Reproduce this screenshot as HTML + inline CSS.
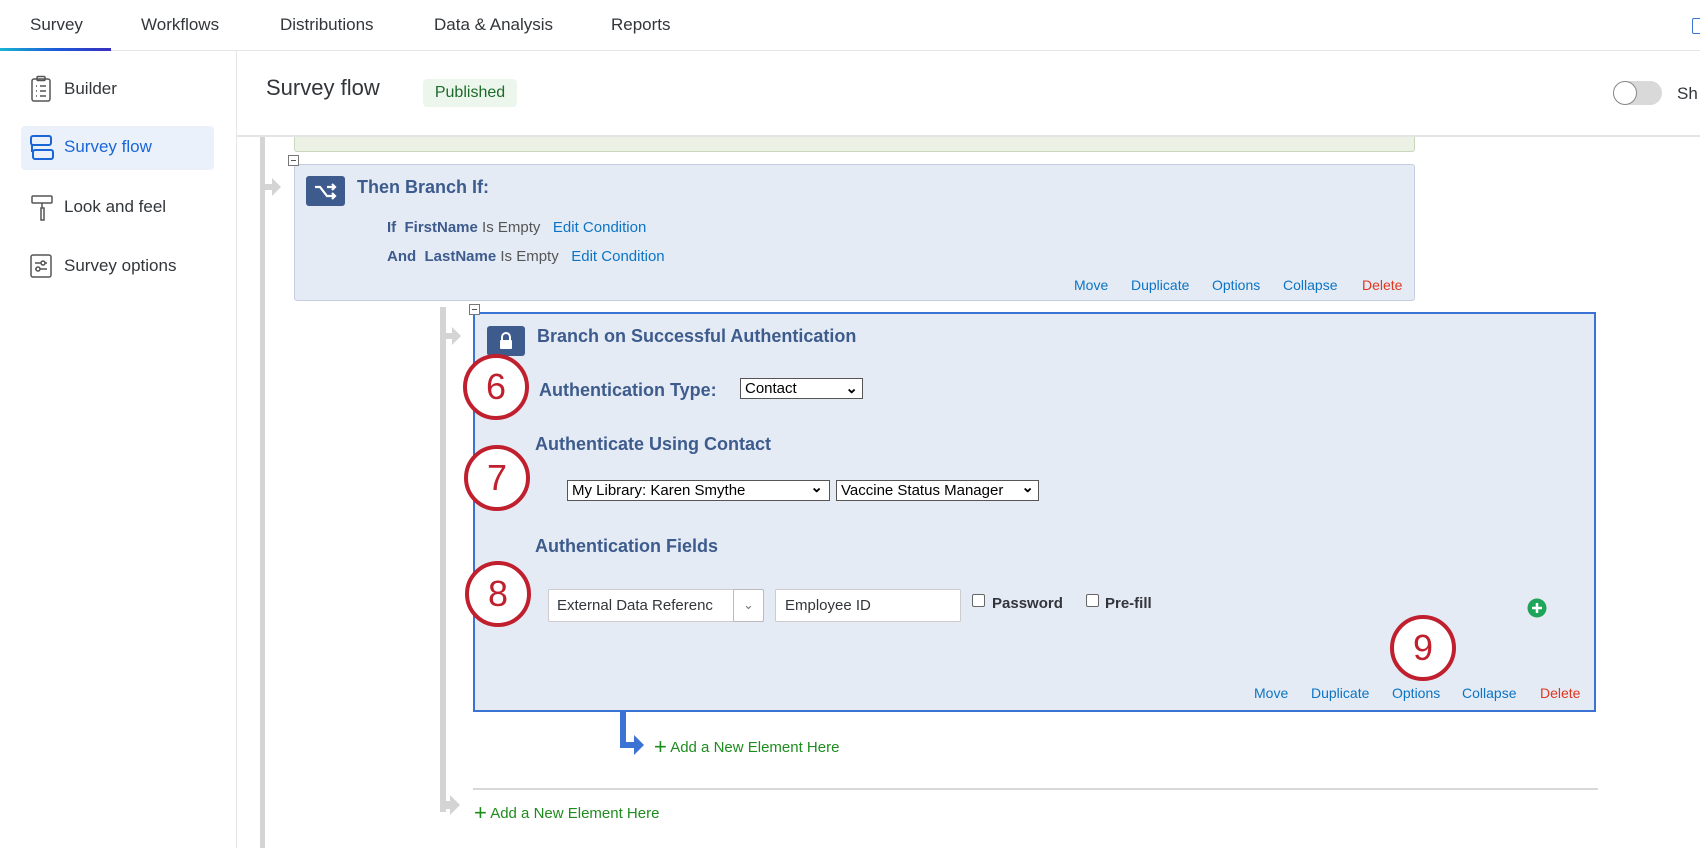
<!DOCTYPE html>
<html><head><meta charset="utf-8"><style>
*{box-sizing:border-box;margin:0;padding:0}
body{width:1700px;height:848px;overflow:hidden;background:#fff;font-family:"Liberation Sans",Arial,sans-serif;position:relative;color:#32363a}
.a{position:absolute;white-space:nowrap}
.tab{font-size:17px;top:15px;color:#32363a}
.side{font-size:17px;left:64px;color:#32363a}
.box{position:absolute;background:#e5ebf5;border:1px solid #c3cede;border-radius:3px}
.ttl{color:#3d5b8c;font-weight:bold;font-size:18px}
.lnk{color:#0b74c4;font-size:14px}
.del{color:#e0361e;font-size:14px}
.circ{position:absolute;width:66px;height:66px;border:4px solid #c01f2e;border-radius:50%;background:#fff;color:#c01f2e;font-size:36px;text-align:center;line-height:58px}
.sel{position:absolute;background:#fff;border:1px solid #555;font-size:15px;padding-left:4px;line-height:19px;color:#000}
.green{color:#1e8c1e;font-size:15px}
.mini{position:absolute;width:11px;height:11px;border:1px solid #777;background:#fff}
.mini:after{content:"";position:absolute;left:2px;right:2px;top:4px;height:1px;background:#555}
</style></head><body>
<!-- top nav -->
<div class="a" style="left:0;top:50px;width:1700px;height:1px;background:#e6e6e6"></div>
<div class="a" style="left:0;top:48px;width:111px;height:3px;background:linear-gradient(90deg,#19b4d2,#1c5ad8,#3a2fbf)"></div>
<div class="a tab" style="left:30px">Survey</div>
<div class="a tab" style="left:141px">Workflows</div>
<div class="a tab" style="left:280px">Distributions</div>
<div class="a tab" style="left:434px">Data &amp; Analysis</div>
<div class="a tab" style="left:611px">Reports</div>
<div class="a" style="left:1692px;top:18px;width:10px;height:16px;border:1.5px solid #3a73d4;border-radius:2px"></div>
<!-- sidebar -->
<div class="a" style="left:236px;top:51px;width:1px;height:797px;background:#e6e6e6"></div>
<div class="a" style="left:21px;top:126px;width:193px;height:44px;background:#eaf1fb;border-radius:4px"></div>
<svg class="a" style="left:30px;top:75px" width="22" height="28" viewBox="0 0 22 28" fill="none" stroke="#555" stroke-width="1.5"><rect x="2" y="4" width="18" height="22" rx="2"/><rect x="7" y="1.5" width="8" height="4" rx="1"/><path d="M6 11h1M6 16h1M6 21h1M10 11h6M10 16h6M10 21h6"/></svg>
<div class="a side" style="top:79px">Builder</div>
<svg class="a" style="left:30px;top:135px" width="24" height="26" viewBox="0 0 24 26" fill="none" stroke="#1a66d6" stroke-width="2"><rect x="1" y="1" width="20" height="9" rx="2"/><rect x="3" y="15" width="20" height="9" rx="2"/><path d="M2 10v7"/></svg>
<div class="a side" style="top:137px;color:#1a66d6">Survey flow</div>
<svg class="a" style="left:31px;top:195px" width="22" height="28" viewBox="0 0 22 28" fill="none" stroke="#555" stroke-width="1.5"><rect x="1" y="1" width="20" height="7" rx="1"/><path d="M11 8v5M10 13h3v12h-3z"/></svg>
<div class="a side" style="top:197px">Look and feel</div>
<svg class="a" style="left:30px;top:254px" width="22" height="24" viewBox="0 0 22 24" fill="none" stroke="#555" stroke-width="1.5"><rect x="1" y="1" width="20" height="22" rx="2"/><path d="M5 9h12M5 15h12"/><circle cx="13" cy="9" r="2" fill="#fff"/><circle cx="8" cy="15" r="2" fill="#fff"/></svg>
<div class="a side" style="top:256px">Survey options</div>
<!-- header -->
<div class="a" style="left:266px;top:75px;font-size:22px;color:#32363a">Survey flow</div>
<div class="a" style="left:423px;top:79px;width:94px;height:28px;background:#edf6ed;border-radius:4px;color:#1c6b2a;font-size:16px;text-align:center;line-height:28px">Published</div>
<div class="a" style="left:1613px;top:81px;width:49px;height:24px;background:#d9d9d9;border-radius:12px"></div>
<div class="a" style="left:1613px;top:81px;width:24px;height:24px;background:#fff;border:1.5px solid #888;border-radius:50%"></div>
<div class="a" style="left:1677px;top:84px;font-size:17px">Sh</div>
<!-- flow content -->
<div class="a" style="left:294px;top:136px;width:1121px;height:16px;background:#ebf1e4;border:1px solid #c9d8bd;border-top:none;border-radius:0 0 3px 3px"></div>
<div class="a" style="left:237px;top:135px;width:1463px;height:2px;background:#e4e4e4"></div>
<div class="a" style="left:260px;top:137px;width:5px;height:711px;background:#d4d4d4"></div>
<svg class="a" style="left:262px;top:176px" width="22" height="22"><path d="M0 8h10V2l9 9-9 9v-6H0z" fill="#d4d4d4"/></svg>
<div class="box" style="left:294px;top:164px;width:1121px;height:137px"></div>
<div class="mini" style="left:288px;top:155px"></div>
<div class="a" style="left:306px;top:176px;width:39px;height:30px;background:#3d5b8c;border-radius:3px"></div>
<svg class="a" style="left:314px;top:182px" width="24" height="18" viewBox="0 0 24 18" fill="none" stroke="#fff" stroke-width="2.2"><path d="M1 5h5l7 9h8M13 5h8M18 2l3 3-3 3M18 11l3 3-3 3"/></svg>
<div class="a ttl" style="left:357px;top:177px">Then Branch If:</div>
<div class="a" style="left:387px;top:219px;font-size:15px"><b style="color:#3d5b8c">If&nbsp; FirstName</b> <span style="color:#555">Is Empty</span> &nbsp; <span class="lnk" style="font-size:15px">Edit Condition</span></div>
<div class="a" style="left:387px;top:248px;font-size:15px"><b style="color:#3d5b8c">And&nbsp; LastName</b> <span style="color:#555">Is Empty</span> &nbsp; <span class="lnk" style="font-size:15px">Edit Condition</span></div>
<div class="a lnk" style="left:1074px;top:277px">Move</div>
<div class="a lnk" style="left:1131px;top:277px">Duplicate</div>
<div class="a lnk" style="left:1212px;top:277px">Options</div>
<div class="a lnk" style="left:1283px;top:277px">Collapse</div>
<div class="a del" style="left:1362px;top:277px">Delete</div>
<!-- inner -->
<div class="a" style="left:440px;top:307px;width:6px;height:505px;background:#d4d4d4"></div>
<svg class="a" style="left:442px;top:326px" width="22" height="22"><path d="M0 7h10V1l9 9-9 9v-6H0z" fill="#d4d4d4"/></svg>
<div class="box" style="left:473px;top:312px;width:1123px;height:400px;border:2px solid #3a73d4;border-radius:0"></div>
<div class="mini" style="left:469px;top:304px"></div>
<div class="a" style="left:487px;top:326px;width:38px;height:30px;background:#3d5b8c;border-radius:3px"></div>
<svg class="a" style="left:497px;top:330px" width="18" height="22" viewBox="0 0 18 22"><path d="M5 10V7a4 4 0 0 1 8 0v3" stroke="#fff" stroke-width="2" fill="none"/><rect x="3" y="10" width="12" height="9" rx="1" fill="#fff"/></svg>
<div class="a ttl" style="left:537px;top:326px">Branch on Successful Authentication</div>
<div class="a ttl" style="left:539px;top:380px">Authentication Type:</div>
<div class="sel" style="left:740px;top:378px;width:123px;height:21px">Contact<span style="position:absolute;right:4px;font-weight:bold">&#8964;</span></div>
<div class="a ttl" style="left:535px;top:434px">Authenticate Using Contact</div>
<div class="sel" style="left:567px;top:480px;width:263px;height:21px">My Library: Karen Smythe<span style="position:absolute;right:6px;top:-3px;font-weight:bold">&#8964;</span></div>
<div class="sel" style="left:836px;top:480px;width:203px;height:21px">Vaccine Status Manager<span style="position:absolute;right:4px;top:-3px;font-weight:bold">&#8964;</span></div>
<div class="a ttl" style="left:535px;top:536px">Authentication Fields</div>
<div class="a" style="left:548px;top:589px;width:216px;height:33px;background:#fff;border:1px solid #ccc;border-radius:2px;font-size:15px;line-height:31px;padding-left:8px;overflow:hidden">External Data Referenc</div>
<div class="a" style="left:733px;top:589px;width:31px;height:33px;background:#fff;border:1px solid #bbb;border-radius:2px;color:#777;text-align:center;line-height:29px;font-size:13px">&#8964;</div>
<div class="a" style="left:775px;top:589px;width:186px;height:33px;background:#fff;border:1px solid #ccc;border-radius:2px;font-size:15px;line-height:31px;padding-left:9px">Employee ID</div>
<div class="a" style="left:972px;top:594px;width:13px;height:13px;background:#fff;border:1px solid #666;border-radius:2px"></div>
<div class="a" style="left:992px;top:595px;font-size:15px;font-weight:bold">Password</div>
<div class="a" style="left:1086px;top:594px;width:13px;height:13px;background:#fff;border:1px solid #666;border-radius:2px"></div>
<div class="a" style="left:1105px;top:595px;font-size:15px;font-weight:bold">Pre-fill</div>
<svg class="a" style="left:1527px;top:598px" width="20" height="20"><circle cx="10" cy="10" r="9.5" fill="#1fa55a"/><path d="M10 5v10M5 10h10" stroke="#fff" stroke-width="2.5"/></svg>
<div class="a lnk" style="left:1254px;top:685px">Move</div>
<div class="a lnk" style="left:1311px;top:685px">Duplicate</div>
<div class="a lnk" style="left:1392px;top:685px">Options</div>
<div class="a lnk" style="left:1462px;top:685px">Collapse</div>
<div class="a del" style="left:1540px;top:685px">Delete</div>
<div class="circ" style="left:463px;top:354px">6</div>
<div class="circ" style="left:464px;top:445px">7</div>
<div class="circ" style="left:465px;top:561px">8</div>
<div class="circ" style="left:1390px;top:615px">9</div>
<svg class="a" style="left:618px;top:712px" width="34" height="44"><path d="M2 0h6v30h8v-7l10 10-10 10v-7H2z" fill="#3a73d4"/></svg>
<div class="a green" style="left:654px;top:736px"><span style="font-size:22px;line-height:18px;position:relative;top:2px">+</span> Add a New Element Here</div>
<div class="a" style="left:473px;top:788px;width:1125px;height:2px;background:#d8d8d8"></div>
<svg class="a" style="left:440px;top:795px" width="24" height="24"><path d="M0 6h10V0l10 10-10 10v-6H0z" fill="#d4d4d4"/></svg>
<div class="a green" style="left:474px;top:802px"><span style="font-size:22px;line-height:18px;position:relative;top:2px">+</span> Add a New Element Here</div>
</body></html>
